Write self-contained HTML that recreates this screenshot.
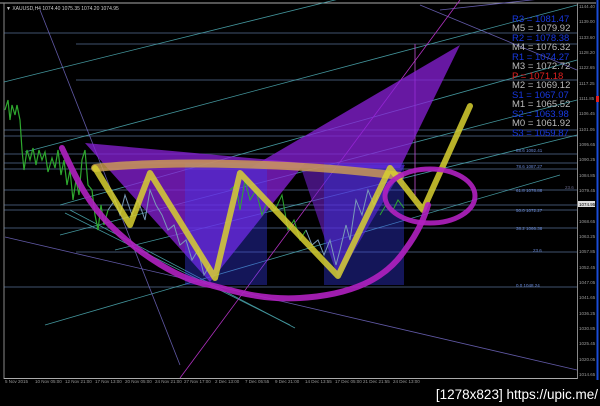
<!DOCTYPE html>
<html><head><meta charset="utf-8"><style>
html,body{margin:0;padding:0;background:#000;width:600px;height:406px;overflow:hidden}
svg{display:block}
text{font-family:"Liberation Sans",sans-serif}
</style></head><body>
<svg width="600" height="406" viewBox="0 0 600 406" xmlns="http://www.w3.org/2000/svg">
<rect width="600" height="406" fill="#000"/>
<!-- frame -->
<line x1="0" y1="3" x2="596" y2="3" stroke="#aaa" stroke-width="1"/>
<line x1="4" y1="3" x2="4" y2="379" stroke="#888" stroke-width="1"/>
<line x1="4" y1="378.5" x2="577" y2="378.5" stroke="#aaa" stroke-width="1"/>
<line x1="577.5" y1="3" x2="577.5" y2="379" stroke="#888" stroke-width="1"/>
<line x1="597.5" y1="0" x2="597.5" y2="380" stroke="#1a4dd8" stroke-width="2"/>
<rect x="596" y="96" width="3" height="6" fill="#e02020"/>

<!-- horizontal lines -->
<g stroke="#6a8ab8" stroke-width="0.8" opacity="0.8">
<line x1="4" y1="33" x2="577" y2="33"/>
<line x1="76" y1="44" x2="577" y2="44"/>
<line x1="76" y1="80" x2="577" y2="80"/>
<line x1="4" y1="130" x2="577" y2="130"/>
<line x1="4" y1="136" x2="577" y2="136"/>
<line x1="4" y1="154" x2="577" y2="154"/>
<line x1="4" y1="163" x2="577" y2="163"/>
<line x1="4" y1="169" x2="577" y2="169"/>
<line x1="4" y1="190" x2="577" y2="190"/>
<line x1="4" y1="205" x2="577" y2="205"/>
<line x1="4" y1="210" x2="577" y2="210"/>
<line x1="4" y1="228" x2="577" y2="228"/>
<line x1="76" y1="252" x2="577" y2="252"/>
<line x1="4" y1="287" x2="577" y2="287"/>
</g>
<!-- diagonal channel lines -->
<g stroke="#4fb0b8" stroke-width="0.8" opacity="0.85">
<line x1="4" y1="82" x2="577" y2="-60"/>
<line x1="25" y1="152" x2="577" y2="5"/>
<line x1="60" y1="205" x2="577" y2="60"/>
<line x1="60" y1="235" x2="577" y2="100"/>
<line x1="115" y1="250" x2="577" y2="135"/>
<line x1="45" y1="325" x2="560" y2="175"/>
<line x1="65" y1="213" x2="290" y2="325"/>
<line x1="70" y1="210" x2="295" y2="328"/>
</g>
<g stroke="#7a70d0" stroke-width="0.8" opacity="0.8">
<line x1="5" y1="237" x2="577" y2="370"/>
<line x1="40" y1="10" x2="180" y2="365"/>
<line x1="420" y1="5" x2="577" y2="70"/>
<line x1="440" y1="10" x2="577" y2="-5"/>
</g>
<line x1="180" y1="378" x2="460" y2="0" stroke="#b030c0" stroke-width="0.8"/>
<line x1="415" y1="44" x2="415" y2="200" stroke="#c050d0" stroke-width="0.8"/>

<!-- purple triangles -->
<polygon points="85,143 305,163 210,282" fill="#8a20d8" opacity="0.75"/>
<polygon points="250,168 460,45 400,168" fill="#8a20d8" opacity="0.75"/>
<polygon points="300,165 405,165 338,278" fill="#7020c8" opacity="0.6"/>
<!-- blue rects -->
<rect x="185" y="163" width="82" height="122" fill="#3a40ff" opacity="0.35"/>
<rect x="324" y="163" width="80" height="122" fill="#3a40ff" opacity="0.35"/>

<!-- candles green -->
<polyline fill="none" stroke="#2ea82e" stroke-width="1.2" points="5,110 8,100 10,120 12,105 15,115 17,105 20,120 22,150 24,170 27,150 30,160 33,148 36,165 39,150 42,160 45,152 48,172 52,158 55,168 58,150 61,175 64,160 67,185 70,170 73,200 76,180 79,195 82,160 85,150 88,185 92,190 95,215 98,230 101,205 104,225 108,210"/>
<polyline fill="none" stroke="#2ea82e" stroke-width="1" points="230,190 236,185 240,210 245,180 250,200 256,190 262,215 268,200 275,210 282,195 288,230 294,220 300,240 306,230"/>
<polyline fill="none" stroke="#2ea82e" stroke-width="1" points="380,215 386,205 392,212 398,200 404,208"/>
<!-- candles bluish -->
<polyline fill="none" stroke="#7a9ab8" stroke-width="1" points="108,210 115,200 120,215 125,195 132,215 138,200 145,220 150,190 156,205 162,215 168,230 174,225 180,245 186,240 192,260 198,250 204,275 210,265"/>
<polyline fill="none" stroke="#7a9ab8" stroke-width="1" points="306,230 312,245 318,240 324,255 330,240 336,265 340,250 346,225 350,240 356,200 362,215 368,190 374,205 378,195"/>

<!-- neckline -->
<path d="M95,168 C170,160 300,163 400,176" fill="none" stroke="#d0a050" stroke-width="8" opacity="0.8" stroke-linecap="round"/>
<!-- yellow zigzag -->
<polyline fill="none" stroke="#d8d030" stroke-width="6" opacity="0.85" stroke-linejoin="round" stroke-linecap="round" points="95,168 130,225 150,173 215,278 240,173 338,276 390,168 423,210 470,106"/>
<!-- magenta curve -->
<path d="M62,148 C75,175 85,200 110,225 C140,255 180,280 210,285 C240,293 265,300 300,298 C350,295 385,280 405,250 C420,230 425,215 428,205" fill="none" stroke="#b020c0" stroke-width="6" opacity="0.9" stroke-linecap="round"/>
<ellipse cx="430" cy="196" rx="45" ry="27" fill="none" stroke="#b020c0" stroke-width="5" opacity="0.9"/>

<!-- top-left text -->
<text x="6" y="10" font-size="5" fill="#ccc">▼ XAUUSD,H4  1074.40  1075.35  1074.20  1074.95</text>

<!-- pivot labels -->
<g font-size="9.5">
<text x="512" y="22" fill="#1838e0">R3 = 1081.47</text>
<text x="512" y="31" fill="#bbb">M5 = 1079.92</text>
<text x="512" y="41" fill="#1838e0">R2 = 1078.38</text>
<text x="512" y="50" fill="#bbb">M4 = 1076.32</text>
<text x="512" y="60" fill="#1838e0">R1 = 1074.27</text>
<text x="512" y="69" fill="#bbb">M3 = 1072.72</text>
<text x="512" y="79" fill="#e02020">P = 1071.18</text>
<text x="512" y="88" fill="#bbb">M2 = 1069.12</text>
<text x="512" y="98" fill="#1838e0">S1 = 1067.07</text>
<text x="512" y="107" fill="#bbb">M1 = 1065.52</text>
<text x="512" y="117" fill="#1838e0">S2 = 1063.98</text>
<text x="512" y="126" fill="#bbb">M0 = 1061.92</text>
<text x="512" y="136" fill="#1838e0">S3 = 1059.87</text>
</g>
<!-- fib labels -->
<g font-size="4.5" fill="#6a8ad8">
<text x="516" y="152">88.6  1092.41</text>
<text x="516" y="168">78.6  1087.27</text>
<text x="516" y="192">61.8  1078.88</text>
<text x="516" y="212">50.0  1072.27</text>
<text x="516" y="230">38.2  1066.38</text>
<text x="533" y="252">23.6</text>
<text x="516" y="287">0.0  1048.24</text>
<text x="565" y="189" fill="#668">23.6</text>
</g>
<!-- price axis -->
<g font-size="4.5" fill="#999">
<text x="579" y="8">1144.40</text>
<text x="579" y="23">1139.00</text>
<text x="579" y="39">1133.60</text>
<text x="579" y="54">1128.20</text>
<text x="579" y="69">1122.65</text>
<text x="579" y="85">1117.25</text>
<text x="579" y="100">1111.85</text>
<text x="579" y="115">1106.45</text>
<text x="579" y="131">1101.05</text>
<text x="579" y="146">1095.65</text>
<text x="579" y="161">1090.25</text>
<text x="579" y="177">1084.85</text>
<text x="579" y="192">1079.45</text>
<text x="579" y="223">1068.65</text>
<text x="579" y="238">1063.25</text>
<text x="579" y="253">1057.85</text>
<text x="579" y="269">1052.45</text>
<text x="579" y="284">1047.05</text>
<text x="579" y="299">1041.65</text>
<text x="579" y="315">1036.25</text>
<text x="579" y="330">1030.85</text>
<text x="579" y="345">1025.45</text>
<text x="579" y="361">1020.05</text>
<text x="579" y="376">1014.65</text>
</g>
<rect x="578" y="201" width="17" height="6" fill="#ddd"/>
<text x="579" y="206" font-size="4.5" fill="#000">1074.95</text>
<!-- time axis -->
<g font-size="4.5" fill="#999">
<text x="5" y="383">5 Nov 2015</text>
<text x="35" y="383">10 Nov 05:00</text>
<text x="65" y="383">12 Nov 21:00</text>
<text x="95" y="383">17 Nov 13:00</text>
<text x="125" y="383">20 Nov 05:00</text>
<text x="155" y="383">24 Nov 21:00</text>
<text x="184" y="383">27 Nov 17:00</text>
<text x="215" y="383">2 Dec 13:00</text>
<text x="245" y="383">7 Dec 05:55</text>
<text x="275" y="383">9 Dec 21:00</text>
<text x="305" y="383">14 Dec 13:55</text>
<text x="335" y="383">17 Dec 05:00</text>
<text x="363" y="383">21 Dec 21:55</text>
<text x="393" y="383">24 Dec 13:00</text>
</g>
<text x="598" y="399" font-size="13.5" fill="#fff" text-anchor="end" font-family="Liberation Sans Narrow,Liberation Sans,sans-serif">[1278x823] https://upic.me/</text>
</svg>
</body></html>
